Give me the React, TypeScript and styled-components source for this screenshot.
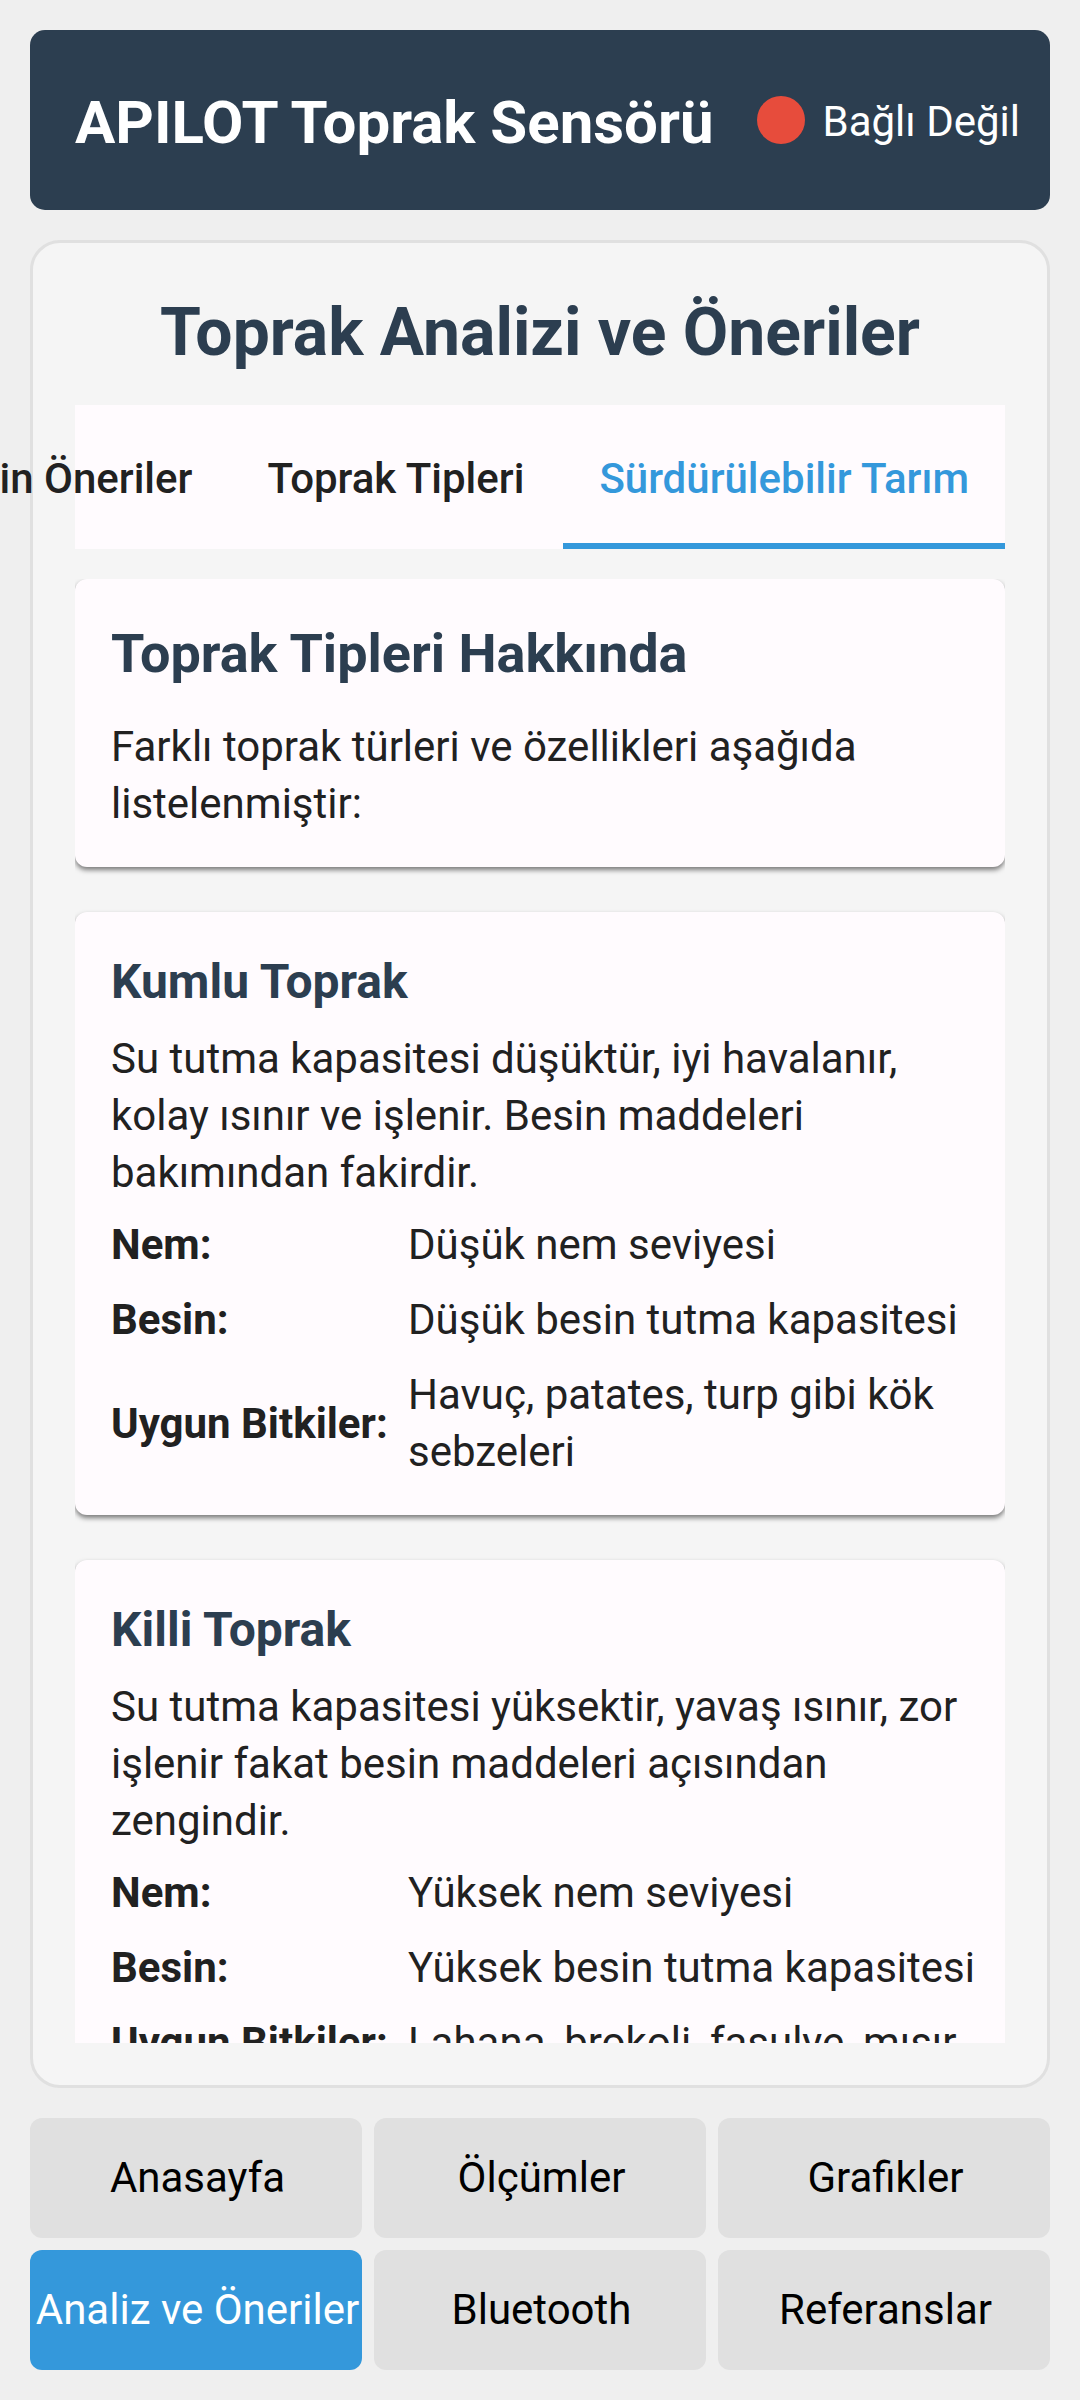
import React, { useState } from "react";
import styled, { createGlobalStyle } from "styled-components";

const color = {
  page: "#efefef",
  navy: "#2c3e50",
  blue: "#3498db",
  red: "#e74c3c",
  panel: "#f5f5f5",
  line: "#e0e0e0",
  surface: "#fffbfe",
  text: "#212121",
};

const GlobalStyle = createGlobalStyle`
  *, *::before, *::after { box-sizing: border-box; }
  body {
    margin: 0;
    background: ${color.page};
    color: ${color.text};
    font-family: Roboto, "Noto Sans", sans-serif;
    font-size: 42px;
    line-height: 57px;
  }
`;

const Page = styled.div`
  display: flex;
  flex-direction: column;
  gap: 30px;
  height: 100vh;
  padding: 30px;
  overflow: hidden;
`;

const Header = styled.header`
  display: flex;
  align-items: center;
  justify-content: space-between;
  min-height: 180px;
  padding: 0 30px 0 45px;
  border-radius: 15px;
  background: ${color.navy};
  color: #fff;
`;

const AppName = styled.h1`
  margin: 0;
  padding-top: 6px;
  font-size: 60px;
  line-height: 78px;
  font-weight: 700;
`;

const Status = styled.div`
  display: flex;
  align-items: center;
  gap: 18px;
`;

const StatusText = styled.span`
  padding-top: 3px;
`;

const StatusDot = styled.span<{ $on: boolean }>`
  width: 48px;
  height: 48px;
  border-radius: 50%;
  background: ${(p) => (p.$on ? "#2ecc71" : color.red)};
`;

const Panel = styled.main`
  display: flex;
  flex: 1;
  flex-direction: column;
  min-height: 0;
  padding: 42px;
  border: 3px solid ${color.line};
  border-radius: 30px;
  background: ${color.panel};
`;

const PanelTitle = styled.h2`
  margin: 0;
  padding: 3px 0 27px;
  color: ${color.navy};
  font-size: 66px;
  line-height: 90px;
  font-weight: 700;
  text-align: center;
`;

const TabBar = styled.div`
  display: flex;
  flex-shrink: 0;
  justify-content: flex-end;
  gap: 3px;
  height: 144px;
  margin-bottom: 30px;
  background: ${color.surface};
`;

const Tab = styled.button<{ $active: boolean }>`
  flex-shrink: 0;
  padding: 8px 36px 0;
  border: 0;
  border-bottom: 6px solid ${(p) => (p.$active ? color.blue : "transparent")};
  background: none;
  color: ${(p) => (p.$active ? color.blue : color.text)};
  font: inherit;
  font-weight: 500;
  white-space: nowrap;
`;

const Scroller = styled.div`
  display: flex;
  flex: 1;
  flex-direction: column;
  gap: 45px;
  min-height: 0;
  overflow-y: auto;
  scrollbar-width: none;
`;

const Card = styled.section`
  flex-shrink: 0;
  padding: 37px 36px 35px;
  border-radius: 12px;
  background: ${color.surface};
  box-shadow: 0 3px 5px rgba(0, 0, 0, 0.5);
`;

const IntroTitle = styled.h3`
  margin: 0 0 27px;
  color: ${color.navy};
  font-size: 54px;
  line-height: 75px;
  font-weight: 700;
`;

const SoilTitle = styled.h3`
  margin: 0 0 15px;
  color: ${color.navy};
  font-size: 48px;
  line-height: 66px;
  font-weight: 700;
`;

const Text = styled.p`
  margin: 0;
`;

const Facts = styled.table`
  width: calc(100% + 9px);
  margin: 6px 0 -9px;
  border-collapse: collapse;
`;

const FactName = styled.th`
  width: 297px;
  padding: 9px 0;
  font-weight: 700;
  text-align: left;
  vertical-align: middle;
  white-space: nowrap;
`;

const FactValue = styled.td`
  padding: 9px 0;
`;

const Nav = styled.nav`
  display: grid;
  grid-template-columns: repeat(3, minmax(0, 1fr));
  gap: 12px;
`;

const NavButton = styled.button<{ $active: boolean }>`
  height: 120px;
  padding: 0 0 2px 3px;
  border: 0;
  border-radius: 12px;
  background: ${(p) => (p.$active ? color.blue : color.line)};
  color: ${(p) => (p.$active ? "#fff" : "#000")};
  font: inherit;
  white-space: nowrap;
`;

const tabs = ["Bitki İçin Öneriler", "Toprak Tipleri", "Sürdürülebilir Tarım"];

const sections = [
  "Anasayfa",
  "Ölçümler",
  "Grafikler",
  "Analiz ve Öneriler",
  "Bluetooth",
  "Referanslar",
];

const soils = [
  {
    name: "Kumlu Toprak",
    about:
      "Su tutma kapasitesi düşüktür, iyi havalanır, kolay ısınır ve işlenir. Besin maddeleri bakımından fakirdir.",
    facts: [
      ["Nem:", "Düşük nem seviyesi"],
      ["Besin:", "Düşük besin tutma kapasitesi"],
      ["Uygun Bitkiler:", "Havuç, patates, turp gibi kök sebzeleri"],
    ],
  },
  {
    name: "Killi Toprak",
    about:
      "Su tutma kapasitesi yüksektir, yavaş ısınır, zor işlenir fakat besin maddeleri açısından zengindir.",
    facts: [
      ["Nem:", "Yüksek nem seviyesi"],
      ["Besin:", "Yüksek besin tutma kapasitesi"],
      ["Uygun Bitkiler:", "Lahana, brokoli, fasulye, mısır"],
    ],
  },
];

export default function App() {
  const [tab, setTab] = useState(2);
  const [section, setSection] = useState(3);

  return (
    <>
      <GlobalStyle />
      <Page>
        <Header>
          <AppName>APILOT Toprak Sensörü</AppName>
          <Status role="status">
            <StatusDot $on={false} />
            <StatusText>Bağlı Değil</StatusText>
          </Status>
        </Header>

        <Panel>
          <PanelTitle>Toprak Analizi ve Öneriler</PanelTitle>
          <TabBar role="tablist">
            {tabs.map((name, i) => (
              <Tab
                key={name}
                type="button"
                role="tab"
                aria-selected={i === tab}
                $active={i === tab}
                onClick={() => setTab(i)}
              >
                {name}
              </Tab>
            ))}
          </TabBar>

          <Scroller>
            <Card>
              <IntroTitle>Toprak Tipleri Hakkında</IntroTitle>
              <Text>Farklı toprak türleri ve özellikleri aşağıda listelenmiştir:</Text>
            </Card>
            {soils.map((soil) => (
              <Card key={soil.name}>
                <SoilTitle>{soil.name}</SoilTitle>
                <Text>{soil.about}</Text>
                <Facts>
                  <tbody>
                    {soil.facts.map(([name, value]) => (
                      <tr key={name}>
                        <FactName scope="row">{name}</FactName>
                        <FactValue>{value}</FactValue>
                      </tr>
                    ))}
                  </tbody>
                </Facts>
              </Card>
            ))}
          </Scroller>
        </Panel>

        <Nav>
          {sections.map((name, i) => (
            <NavButton
              key={name}
              type="button"
              $active={i === section}
              onClick={() => setSection(i)}
            >
              {name}
            </NavButton>
          ))}
        </Nav>
      </Page>
    </>
  );
}
